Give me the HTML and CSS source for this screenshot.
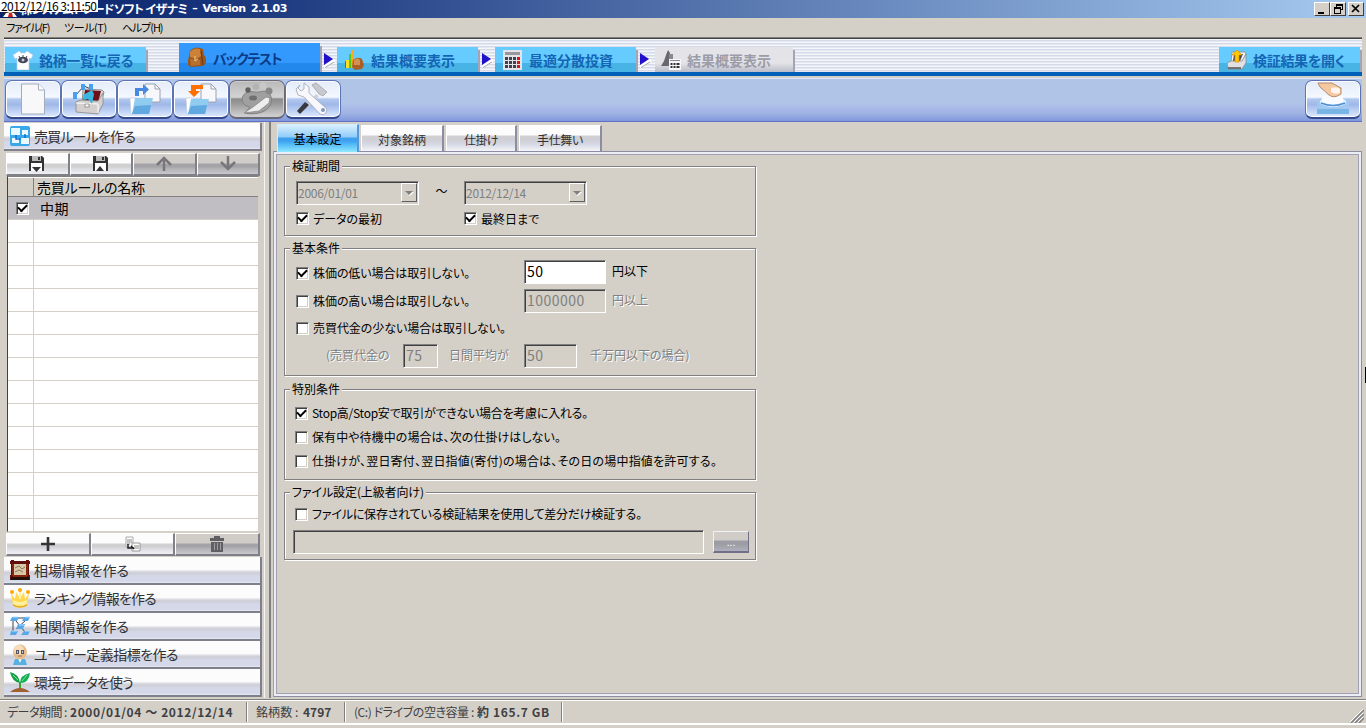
FILE: index.html
```html
<!DOCTYPE html>
<html lang="ja">
<head>
    <meta charset="UTF-8" />
    <meta name="viewport" content="width=device-width, initial-scale=1.0"/>
    <title>イザナミ - Version 2.1.03</title>
    <link rel="stylesheet" href="styles.css">
</head>
<body>
    <header class="titlebar">
        <svg class="app-icon" width="16" height="16"><rect x="1" y="1" width="14" height="12" fill="#222"/><circle cx="8" cy="8" r="4" fill="#f4c8a0"/><path d="M1 16l3-4h8l3 4z" fill="#fff"/><path d="M7 12h3l1 4H6z" fill="#d02020"/></svg>
        <span class="title">株システムトレードソフト イザナミ</span>
        <span class="title version">– Version 2.1.03</span>
        <span class="clock">2012/12/16 3:11:50</span>
        <div class="win-buttons">
            <button><svg width="14" height="12"><path d="M3 9h6v2H3z"/></svg></button>
            <button><svg width="14" height="12"><path d="M5 1h7v6h-2V6h1V3H6v1H5zM3 4h7v7H3zM4 6v4h5V6z" fill-rule="evenodd"/></svg></button>
            <button class="close"><svg width="14" height="12"><path d="M3 2l7 7M10 2L3 9" stroke="#000" stroke-width="1.7"/></svg></button>
        </div>
    </header>
    <nav class="menubar">
        <span class="m-file">ファイル(F)</span>
        <span class="m-tool">ツール(T)</span>
        <span class="m-help">ヘルプ(H)</span>
    </nav>

    <div class="steps">
        <div class="step back">
            <svg width="20" height="20"><path d="M6 1L0 5l2 4 2-1v12h12V8l2 1 2-4-6-4-2 2H8z" fill="#fff" stroke="#b8c8dc" stroke-width=".7"/><ellipse cx="10" cy="10" rx="5" ry="3.2" fill="#445"/><circle cx="10" cy="10" r="1.5" fill="#bcd"/><path d="M6 6l1 2M10 5v2M14 6l-1 2" stroke="#445"/></svg>
            <span>銘柄一覧に戻る</span>
        </div>
        <div class="step active">
            <svg width="21" height="21"><path d="M3 4q4-5 10-3l3 1 1 6 2 3v5l-3 3-12 1-3-2V13l1-4z" fill="#9b561c"/><path d="M3 5q4-5 10-3l1 7-5 3-6-2z" fill="#c98238"/><path d="M3 12l10 1v5l-9 1z" fill="#b87030"/><path d="M8 9v5l3-2" stroke="#f0c890" fill="none"/><path d="M14 4l2 14" stroke="#6b3510" fill="none"/></svg>
            <span class="t-back">バックテスト</span>
        </div>
        <svg class="arrow" width="18" height="29"><path d="M4 24L15 17" stroke="#fff" stroke-width="3"/><path d="M5 24.500L14 19" stroke="#aaa"/><path d="M4 10v12l9-6z" fill="#2211cc"/></svg>
        <div class="step">
            <svg width="20" height="20"><path d="M0 11h4v7H0z" fill="#e83010"/><path d="M1 10h3v8H1z" fill="#ffe020"/><path d="M4 4h4v14H4z" fill="#50c820"/><path d="M6 0h3v18H6z" fill="#ffa818"/><path d="M8 10q5-4 9-1l2 6-2 4-7 1-3-3z" fill="#a86028"/><path d="M9 10q4-3 6 0l0 5-6 0z" fill="#d49050"/></svg>
            <span>結果概要表示</span>
        </div>
        <svg class="arrow" width="18" height="29"><path d="M4 24L15 17" stroke="#fff" stroke-width="3"/><path d="M5 24.500L14 19" stroke="#aaa"/><path d="M4 10v12l9-6z" fill="#2211cc"/></svg>
        <div class="step">
            <svg width="20" height="20"><rect width="19" height="20" fill="#e4e4e8"/><rect x="2" y="2" width="15" height="3" fill="#98989c"/><path d="M2 7h12v11H2z" fill="#404050"/><path d="M14 7h3v11h-3z" fill="#d01818"/><path d="M2 10.500h15M2 14.500h15M5.500 7v11M9.500 7v11M13.500 7v11" stroke="#e4e4e8"/></svg>
            <span>最適分散投資</span>
        </div>
        <svg class="arrow" width="18" height="29"><path d="M4 24L15 17" stroke="#fff" stroke-width="3"/><path d="M5 24.500L14 19" stroke="#aaa"/><path d="M4 10v12l9-6z" fill="#2211cc"/></svg>
        <div class="step disabled">
            <svg width="22" height="20"><path d="M0 16l3-5 2-6 2-5 2 3v13z" fill="#686870"/><path d="M8 4h4v8H8z" fill="#888890"/><rect x="8" y="9" width="12" height="11" fill="#f8f8f8"/><path d="M9 10h10v1H9z" fill="#888"/><path d="M9.500 13h2v2h-2zm3 0h2v2h-2zm3 0h3v2h-3zm-6 3h2v2h-2zm3 0h2v2h-2zm3 0h3v2h-3z" fill="#303038"/></svg>
            <span>結果概要表示</span>
        </div>
        <div class="step open">
            <svg width="20" height="20"><path d="M5 2h13l1 2-4 8H4z" fill="#f4f4f4" stroke="#888" stroke-width=".8"/><path d="M7 4h9l-3 7H6z" fill="#484850"/><path d="M0 13l4-2h11l4-7v9l-4 6H1z" fill="#e0e0e4" stroke="#888" stroke-width=".8"/><path d="M1 18h13" stroke="#555" stroke-width="1.500"/><path d="M10 0l5 5h-3v7H8V5H5z" fill="#ffc800" stroke="#e09000" stroke-width=".7"/></svg>
            <span>検証結果を開く</span>
        </div>
    </div>

    <div class="toolbar">
        <button><svg width="54" height="38"><path d="M15.500 4h17l6 6v24h-23z" fill="#f8f8fa" stroke="#a4acb8"/><path d="M32.500 4v6h6" fill="#fff" stroke="#a4acb8"/></svg></button>
        <button><svg width="54" height="38"><path d="M21 9l19 1 2 2-4 14H20z" fill="#d8d8d8" stroke="#777" stroke-width=".8"/><path d="M23 10l16 1-3 12-15-1z" fill="#701018"/><path d="M14 22l5-2 17 1 5-8v11l-5 10-22-2z" fill="#d4d0d0" stroke="#888" stroke-width=".8"/><path d="M14 23l22 1v9" stroke="#fff" fill="none"/><rect x="23" y="24" width="4" height="3" fill="#fff" stroke="#666" stroke-width=".6"/><path d="M13 16l9-10 9 4" stroke="#444" fill="none"/><path d="M11 12h4v7h-4zM19 4h4v6h-4zM27 4h4v6h-4z" fill="#48a0f0"/><path d="M21 15l9-5 2 4-2 10-4-5-4 1z" fill="#38b8e0"/></svg></button>
        <button><svg width="54" height="38"><path d="M27 4h10l5 5v13H27z" fill="#f8f8fc" stroke="#9aa2ae"/><path d="M37 4v5h5" fill="none" stroke="#9aa2ae"/><path d="M12 18h7l2 3v13h-8z" fill="#fff" stroke="#c0c8d8" stroke-width=".6"/><path d="M17 18h18l-4 16H14z" fill="#90ccf0"/><path d="M17 26l16-1-2 9H14z" fill="#60a8e0"/><path d="M17 16V8h8V4l6 5.500-6 5.500v-4h-4v5z" fill="#4888e0"/></svg></button>
        <button><svg width="54" height="38"><path d="M27 4h10l5 5v13H27z" fill="#f8f8fc" stroke="#9aa2ae"/><path d="M37 4v5h5" fill="none" stroke="#9aa2ae"/><path d="M12 18h7l2 3v13h-8z" fill="#fff" stroke="#c0c8d8" stroke-width=".6"/><path d="M17 19h18l-4 15H14z" fill="#90ccf0"/><path d="M17 26l16-1-2 9H14z" fill="#60a8e0"/><path d="M29 5H17v6h-3l6 6 6-6h-4V9h7z" fill="#ff7000"/></svg></button>
        <button class="pressed"><svg width="54" height="38"><path d="M12 19c0 5 4 7 8 8l-5 6c8 2 18 0 22-4 5-4 6-11 2-16-6-4-9 0-14-1s-12 0-13 7z" fill="#a0a0a0" stroke="#808080"/><ellipse cx="23" cy="18" rx="4" ry="2.500" fill="#707070"/><circle cx="18" cy="10" r="2.700" fill="#606060"/><circle cx="26" cy="7" r="3.500" fill="#b4b4b4"/><circle cx="33" cy="6" r="3.500" fill="#c8c8c8"/><circle cx="39" cy="11" r="3.500" fill="#888"/><path d="M14 33l9-6 13-10 4 1-1 5-10 8z" fill="#eee" stroke="#888" stroke-width=".8"/></svg></button>
        <button><svg width="54" height="38"><path d="M26 5l4-2 11 9-4 4-4-2z" fill="#c8c8ce" stroke="#999" stroke-width=".7"/><path d="M30 14l3 2-11 12-2-2z" fill="#d0d0d8"/><path d="M11 31l8-9 4 3-9 9z" fill="#383840"/><path d="M14 5l-4 4 2 6 6 2 16 17q4 2 6-1l1-4-18-16V7l-5-4v6l-3 2-3-3z" fill="#f8f8fc" stroke="#a0a4b4" stroke-width=".8"/><circle cx="37" cy="30" r="2" fill="#8098c0"/></svg></button>
        <button class="run"><svg width="54" height="38"><path d="M11 19h32v5l-1 9H12z" fill="#a0c8f0"/><path d="M11 29h32v5H11z" fill="#78b4e4"/><ellipse cx="27" cy="22" rx="13" ry="5" fill="#e8f4ff"/><path d="M16 16h21v6q-10 5-21 0z" fill="#f8fbff"/><path d="M15 23q12 5 24 0" stroke="#5090d8" stroke-width="1.500" fill="none"/><path d="M12 3h14l9 5v6q-7 5-12 1L14 7z" fill="#f4c8a0" stroke="#a87850" stroke-width=".8"/><path d="M25 8q6-2 9 1v4q-5 2-9-1z" fill="#fff4f0"/></svg></button>
    </div>

    <main class="work">
        <aside class="sidebar">
            <div class="acc head">
                <svg width="20" height="20"><rect width="20" height="20" rx="2" fill="#38a8e8"/><path d="M1 2h9v7H1zM12 4h6v5h-6zM2 12h7v5H2zM11 12h8v6h-8z" fill="#eaf8ff"/><path d="M6 9v4h5M15 8v4" stroke="#1070d0" stroke-width="1.500" fill="none"/></svg>
                <span class="s-rule">売買ルールを作る</span>
            </div>
            <div class="btns">
                <button><svg width="16" height="16"><path d="M0 0h13l2 2v13H0z" fill="#333"/><path d="M3 0h9v5H3z" fill="#bbb"/><path d="M9 1h2v3H9z" fill="#333"/><path d="M2 7h11v8H2z" fill="#fff"/><path d="M3 11h9l-4.500 5z" fill="#333"/></svg></button>
                <button><svg width="16" height="16"><path d="M0 0h13l2 2v13H0z" fill="#333"/><path d="M3 0h9v5H3z" fill="#bbb"/><path d="M9 1h2v3H9z" fill="#333"/><path d="M2 7h11v8H2z" fill="#fff"/><path d="M3 15h8l-4-5z" fill="#333"/></svg></button>
                <button class="off"><svg width="16" height="16"><path d="M8 15V2M1 9l7-7 7 7" stroke="#77777b" stroke-width="2.500" fill="none"/></svg></button>
                <button class="off"><svg width="16" height="16"><path d="M8 0v13M1 6l7 7 7-7" stroke="#77777b" stroke-width="2.500" fill="none"/></svg></button>
            </div>
            <div class="list">
                <div class="row list-head"><span class="cell"></span><span class="name s-name">売買ルールの名称</span></div>
                <div class="row selected"><span class="cell"><i class="check on"></i></span><span class="name s-mid">中期</span></div>
                <div class="row"><span class="cell"></span></div>
                <div class="row"><span class="cell"></span></div>
                <div class="row"><span class="cell"></span></div>
                <div class="row"><span class="cell"></span></div>
                <div class="row"><span class="cell"></span></div>
                <div class="row"><span class="cell"></span></div>
                <div class="row"><span class="cell"></span></div>
                <div class="row"><span class="cell"></span></div>
                <div class="row"><span class="cell"></span></div>
                <div class="row"><span class="cell"></span></div>
                <div class="row"><span class="cell"></span></div>
                <div class="row"><span class="cell"></span></div>
                <div class="row"><span class="cell"></span></div>
                <div class="row"><span class="cell"></span></div>
            </div>
            <div class="btns lower">
                <button><svg width="16" height="16"><path d="M8 1v14M1 8h14" stroke="#333338" stroke-width="2.600"/></svg></button>
                <button><svg width="16" height="16"><path d="M1 1h7v10H1z" fill="#fff" stroke="#aaa"/><path d="M2 4h5M2 6h5M2 8h3" stroke="#888"/><path d="M7 7h8v8H7z" fill="#fff" stroke="#999"/><path d="M9 10h5M9 12h5" stroke="#888"/><path d="M3 8v4h6M6 10l3 3" stroke="#222" stroke-width="1.500" fill="none"/></svg></button>
                <button class="off"><svg width="16" height="16"><path d="M5 2V0h6v2h4v3H1V2z" fill="#606064"/><path d="M2 6h12v10H2z" fill="#606064"/><path d="M5.500 7v7M8.500 7v7M11.500 7v7" stroke="#a0a0a4"/></svg></button>
            </div>
            <div class="acc">
                <svg width="20" height="20"><path d="M0 1h20v3H0zM0 15h20v5H0zM1 0h3v20H1zM16 0h3v20h-3z" fill="#601008"/><path d="M1 17h18v3H1z" fill="#201008"/><rect x="4" y="4" width="12" height="11" fill="#d8c8a8"/><path d="M5 8l4-2 3 3 3-2M5 12l4-2 4 2" stroke="#907858" fill="none"/><path d="M3 4v12h14V4" stroke="#b03818" fill="none"/></svg>
                <span class="s-mkt">相場情報を作る</span>
            </div>
            <div class="acc">
                <svg width="20" height="20"><path d="M1 5l4 6 1-7 4 6 4-6 1 7 4-6-2 13q-7 4-14 0z" fill="#ffd850"/><path d="M9 4h2v7H9zM3 12q7 4 14 0l-.500 4q-7 3-13 0z" fill="#fff0a0"/><circle cx="2" cy="4" r="2" fill="#ffa800"/><circle cx="10" cy="2" r="2" fill="#ffa800"/><circle cx="18" cy="4" r="2" fill="#ffa800"/><path d="M3 17q7 4 14 0" stroke="#d8a020" fill="none"/></svg>
                <span class="s-rank">ランキング情報を作る</span>
            </div>
            <div class="acc">
                <svg width="20" height="20"><path d="M3 3v14M5 2h11M6 5l9 11M15 5L6 13" stroke="#445" fill="none"/><path d="M2 1h7l-2 4H0zM14 1h6l-2 4h-6zM8 8h7l-2 5H6zM1 15h7l-2 4H0zM14 15h6l-2 4h-7z" fill="#58a8e8"/><path d="M3 1h5M15 1h5M9 9h5M2 15h5M15 15h5" stroke="#b0e0ff"/></svg>
                <span class="s-mkt">相関情報を作る</span>
            </div>
            <div class="acc">
                <svg width="20" height="21"><path d="M5 15h10l2 6H3z" fill="#58b0e0"/><path d="M8 14h4l-2 5z" fill="#fff"/><ellipse cx="10" cy="8" rx="7" ry="7.500" fill="#e4bc8c"/><ellipse cx="9" cy="6" rx="5" ry="5" fill="#f8dcb8"/><path d="M6 6h3v4H6zM11 6h3v4h-3z" fill="#556"/><path d="M7 7h1v2H7zM12 7h1v2h-1z" fill="#bcd"/><path d="M8 12h4" stroke="#a87850"/></svg>
                <span class="s-user">ユーザー定義指標を作る</span>
            </div>
            <div class="acc">
                <svg width="20" height="20"><path d="M10 17V10" stroke="#40a030" stroke-width="2"/><path d="M10 11Q2 10 0 0q9 2 10 11z" fill="#18a048"/><path d="M10 11q0-8 10-10-1 10-10 10z" fill="#10b058"/><path d="M12 9l5-6M8 8L3 3" stroke="#80e080"/><path d="M0 20q10-8 20 0z" fill="#a06030"/></svg>
                <span class="s-env">環境データを使う</span>
            </div>
        </aside>
        <div class="splitter"></div>

        <section class="content">
            <div class="tabs">
                <div class="tab current">基本設定</div>
                <div class="tab w83">対象銘柄</div>
                <div class="tab w71 t-entry">仕掛け</div>
                <div class="tab w83 t-exit">手仕舞い</div>
            </div>
            <div class="page">
                <div class="group g-period">
                    <h2>検証期間</h2>
                    <div class="line">
                        <div class="combo"><span>2006/01/01</span><i class="drop"></i></div>
                        <span class="tilde">～</span>
                        <div class="combo"><span>2012/12/14</span><i class="drop"></i></div>
                    </div>
                    <div class="line">
                        <label class="c-first"><i class="check on"></i>データの最初</label>
                        <label><i class="check on"></i>最終日まで</label>
                    </div>
                </div>

                <div class="group g-basic">
                    <h2>基本条件</h2>
                    <div class="line">
                        <label class="c-price"><i class="check on"></i>株価の低い場合は取引しない。</label>
                        <div class="field enabled">50</div>
                        <span class="unit">円以下</span>
                    </div>
                    <div class="line">
                        <label class="c-price"><i class="check"></i>株価の高い場合は取引しない。</label>
                        <div class="field">1000000</div>
                        <span class="unit grey">円以上</span>
                    </div>
                    <div class="line low">
                        <label class="c-value"><i class="check"></i>売買代金の少ない場合は取引しない。</label>
                    </div>
                    <div class="line grey average">
                        <span class="a-value">(売買代金の</span>
                        <div class="field f-days">75</div>
                        <span class="a-days">日間平均が</span>
                        <div class="field f-amount">50</div>
                        <span class="a-case">千万円以下の場合)</span>
                    </div>
                </div>

                <div class="group g-special">
                    <h2>特別条件</h2>
                    <label class="c-stop"><i class="check on"></i>Stop高/Stop安で取引ができない場合を考慮に入れる。</label>
                    <label class="c-hold"><i class="check"></i>保有中や待機中の場合は、次の仕掛けはしない。</label>
                    <label class="c-next"><i class="check"></i>仕掛けが、翌日寄付、翌日指値(寄付)の場合は、その日の場中指値を許可する。</label>
                </div>

                <div class="group g-file">
                    <h2 class="h-file">ファイル設定(上級者向け)</h2>
                    <label class="c-diff"><i class="check"></i>ファイルに保存されている検証結果を使用して差分だけ検証する。</label>
                    <div class="line">
                        <div class="field path"></div>
                        <button class="browse">...</button>
                    </div>
                </div>
            </div>
        </section>
    </main>

    <footer class="status">
        <div class="st-period"><span>データ期間 : </span><b>2000/01/04 ～ 2012/12/14</b></div>
        <div class="st-count"><span>銘柄数 : </span><b>4797</b></div>
        <div class="st-disk"><span>(C:) ドライブの空き容量 : </span><b>約 165.7 GB</b></div>
        <svg class="grip" width="14" height="14"><path d="M1 14L14 1M5 14l9-9M9 14l5-5" stroke="#808080" stroke-width="1.500"/><path d="M0 13L13 0M4 13l9-9M8 13l5-5" stroke="#fff"/></svg>
    </footer>
    <div class="caret"></div>
</body>
</html>
```
FILE: styles.css
```css
* {
    box-sizing: border-box;
}
body {
    margin: 0;
    width: 1366px;
    height: 728px;
    overflow: hidden;
    position: relative;
    background-color: #d4d0c8;
    color: #000;
    font-family: "Noto Sans CJK JP", sans-serif;
    font-size: 12px;
    line-height: 16px;
    font-feature-settings: "palt";
    white-space: nowrap;
}
svg {
    display: block;
    flex: none;
}
button {
    padding: 0;
    border: none;
    font-family: inherit;
    display: flex;
    align-items: center;
    justify-content: center;
}
i {
    flex: none;
}

/* title and menu */
.titlebar {
    height: 18px;
    position: relative;
    display: flex;
    align-items: center;
    padding-left: 2px;
    background: linear-gradient(to right, #0a246a, #16327a 15%, #a6caf0);
}
.app-icon {
    margin-right: 2px;
}
.title {
    color: #fff;
    font-weight: bold;
    letter-spacing: -0.65px;
}
.version {
    margin-left: 5px;
    font-family: "DejaVu Sans", sans-serif;
    font-size: 11px;
    letter-spacing: -0.5px;
    word-spacing: 2px;
}
.clock {
    position: absolute;
    left: 0;
    top: 0;
    width: 98px;
    height: 12px;
    padding-left: 1px;
    line-height: 12px;
    background: #fff;
    letter-spacing: -0.55px;
}
.win-buttons {
    margin-left: auto;
    margin-right: 2px;
    display: flex;
}
.win-buttons button {
    width: 16px;
    height: 14px;
    background: #d4d0c8;
    border: 1px solid;
    border-color: #fff #404040 #404040 #fff;
}
.win-buttons .close {
    margin-left: 2px;
}
.menubar {
    height: 20px;
    padding-left: 6px;
    padding-bottom: 2px;
    display: flex;
    align-items: center;
}
.m-file,
.m-tool,
.m-help {
    font-size: 11px;
    width: 58px;
    letter-spacing: -1.2px;
}
.m-tool {
    letter-spacing: -0.4px;
}
.m-help {
    letter-spacing: -1.1px;
}

/* step tabs */
.steps {
    height: 38px;
    margin: 0 4px;
    padding: 2px 1px 0;
    box-shadow: 0 -1px #808080, inset 0 1px #404040;
    display: flex;
    align-items: flex-end;
    border-bottom: 4px solid #0060b8;
    background: repeating-linear-gradient(#e4e8f2 0 1px, #f4f6fa 1px 2px, #d4dae8 2px 3px);
}
.step {
    width: 141px;
    height: 25px;
    display: flex;
    align-items: center;
    flex: none;
    padding-left: 8px;
    background: linear-gradient(#66ccff 0 16px, #48b4e6 16px);
    color: #1464b4;
    font-size: 14px;
    font-weight: bold;
    box-shadow: 2px 3px #a4a4b4;
    clip-path: inset(0 -2px 0 0);
}
.step span {
    margin-left: 6px;
    line-height: 20px;
    padding-top: 1px;
}
.back span {
    letter-spacing: -0.35px;
}
.active {
    height: 29px;
    margin-left: 33px;
    background: linear-gradient(#3399ff 0 20px, #2288ec 20px);
    color: #0a3c88;
}
.active span {
    padding-top: 0;
}
.step .t-back {
    letter-spacing: -1.3px;
    margin-left: 5px;
}
.arrow {
    margin: 0 -1px 0 0;
}
.disabled {
    background: linear-gradient(#e4e4e8 0 16px, #b8bcc8);
    color: #9c9ca8;
    width: 138px;
    margin-left: 2px;
    padding-left: 6px;
}
.step.disabled span {
    margin-left: 4px;
}
.open {
    margin-left: auto;
    margin-right: 1px;
    letter-spacing: -0.3px;
}

/* toolbar */
.toolbar {
    height: 44px;
    margin: 2px 4px 0;
    padding: 1px 1px 0;
    display: flex;
    align-items: flex-start;
    border-top: 1px solid #d8e8f8;
    border-bottom: 1px solid #6070c8;
    background: linear-gradient(#b0c4e8 0 24px, #a8b8e8 30px, #a0b4e4 34px, #8098dc);
}
.toolbar button {
    width: 56px;
    height: 39px;
    border-radius: 7px;
    border: 1px solid #5c74b4;
    border-bottom: 2px solid #34488c;
    box-shadow: inset 0 0 0 1px #fff;
    background: linear-gradient(#e4ecfa, #f4f8fe 45%, #b4c8ee 50%, #a0b8e8 65%, #dceaff);
}
.toolbar .pressed {
    background: linear-gradient(#b8b8b8, #d4d4d4 45%, #8c8c8c 50%, #9c9c9c 65%, #d4d4d4);
    border-color: #686878;
    box-shadow: inset 0 0 0 1px #ccc;
}
.toolbar .run {
    margin-left: auto;
}

/* sidebar */
.work {
    height: 576px;
    display: flex;
    padding-left: 4px;
}
.sidebar {
    width: 258px;
    color: #303034;
}
.acc {
    height: 28px;
    padding-left: 6px;
    display: flex;
    align-items: center;
    font-size: 14px;
    border-bottom: 2px solid #80808c;
    border-right: 2px solid #80808c;
    background: linear-gradient(#fcfcfc 0 13px, #e8e8ee 13px 14px, #d0d0d8 15px 17px, #d4d8e8 19px 24px, #e4e8f0);
}
.acc span {
    margin-left: 4px;
    line-height: 20px;
}
.acc.head {
    margin-top: 1px;
    margin-bottom: 2px;
}
.s-rule { letter-spacing: -0.8px; }
.s-mkt { letter-spacing: -0.07px; }
.s-rank { letter-spacing: -0.78px; }
.s-user { letter-spacing: -0.53px; }
.s-env { letter-spacing: -0.84px; }
.s-name { letter-spacing: -0.2px; }
.s-mid { letter-spacing: 0.5px; }
.btns {
    height: 23px;
    padding: 0 2px;
    display: flex;
}
.btns button {
    flex: 1;
    border: 1px solid #fff;
    border-right: 2px solid #808088;
    border-bottom: 2px solid #808088;
    background: linear-gradient(#fcfcfc 0 9px, #d0d0d0 10px 13px, #d8d8e0 14px, #f0f0f4);
}
.btns .off {
    background: linear-gradient(#d0ccc8 0 9px, #a4a4a8 10px 13px, #b0b0b4 14px, #c8c8cc);
}
.list {
    height: 356px;
    margin: 0 3px 1px;
    border: 1px solid #808080;
    border-left-color: #404040;
    border-right-color: #d4d0c8;
    border-bottom-color: #d4d0c8;
    background: #fff;
    overflow: hidden;
}
.row {
    height: 23px;
    display: flex;
    align-items: center;
    font-size: 14px;
    color: #000;
    border-bottom: 1px solid #d4d0c8;
}
.cell {
    width: 26px;
    height: 100%;
    flex: none;
    border-right: 1px solid #d4d0c8;
    display: flex;
    align-items: center;
    padding-left: 8px;
}
.name {
    padding-left: 3px;
}
.list-head {
    height: 20px;
    background: #d4d0c8;
    border-bottom-color: #808080;
    border-top: 1px solid #fff;
}
.list-head .cell {
    border-color: #808080;
}
.selected {
    background: #c0bec2;
}
.selected .cell {
    border-color: #c0bec2;
}
.selected .name {
    padding-left: 6px;
}
.lower {
    margin-bottom: 1px;
}
.splitter {
    width: 7px;
    margin-left: 2px;
    border-left: 1px solid #f4f4f4;
    border-right: 2px solid #808080;
}

/* settings page */
.content {
    flex: 1;
    padding: 3px 4px 0 2px;
}
.tabs {
    height: 26px;
    padding-left: 4px;
    display: flex;
    align-items: flex-start;
}
.tab {
    height: 26px;
    margin-right: 2px;
    line-height: 27px;
    text-align: center;
    color: #303034;
    border: 1px solid #fff;
    border-right: 2px solid #8c8ca4;
    border-bottom: none;
    background: linear-gradient(#fcfcfc 0 9px, #d0d0d4 10px 14px, #d4d8e4 18px, #f4f4f8);
}
.tab.current {
    width: 82px;
    height: 28px;
    margin-top: -1px;
    z-index: 1;
    color: #000;
    border-color: #d0ecff;
    border-right: 2px solid #5898d8;
    background: linear-gradient(#d8f0ff, #90ccf8 12px, #40a0f0 13px 16px, #50b8f8 19px, #90e8ff);
}
.w83 { width: 83px; }
.w71 { width: 71px; }
.t-entry { letter-spacing: -0.57px; }
.t-exit { letter-spacing: -0.34px; }
.page {
    height: 546px;
    padding: 14px 0 0 10px;
    border: 1px solid #8c8ca4;
    box-shadow: inset 0 0 0 2px #ececf4, inset 0 0 0 3px #a0a0b0;
    border-left-color: #a0a0b4;
}
.group {
    width: 472px;
    border: 1px solid #808084;
    box-shadow: 1px 1px #fff, inset 1px 1px #fff;
    display: flex;
    flex-direction: column;
    align-items: flex-start;
}
.group h2 {
    margin: -9px 0 0 5px;
    padding: 0 2px;
    background: #d4d0c8;
    font-size: 12px;
    font-weight: normal;
    line-height: 16px;
}
.g-period { height: 70px; margin-bottom: 12px; }
.g-basic { height: 128px; margin-bottom: 13px; }
.g-special { height: 91px; margin-bottom: 12px; }
.g-file { height: 68px; }
.line {
    display: flex;
    align-items: center;
    height: 27px;
    padding-left: 11px;
}
.group label {
    display: flex;
    align-items: center;
    height: 24px;
}
.check {
    width: 13px;
    height: 13px;
    margin-right: 4px;
    border: 1px solid;
    border-color: #808080 #fff #fff #808080;
    box-shadow: inset 1px 1px #404040, inset -1px -1px #d4d0c8;
    background: #fff;
    display: flex;
    align-items: center;
    justify-content: center;
}
.check.on::after {
    content: "";
    width: 7px;
    height: 4px;
    margin-top: -3px;
    border-left: 2px solid #000;
    border-bottom: 2px solid #000;
    transform: rotate(-45deg);
}
.combo, .field {
    height: 24px;
    border: 1px solid;
    border-color: #808080 #fff #fff #808080;
    box-shadow: inset 1px 1px #404040;
    color: #808080;
    display: flex;
    align-items: center;
    padding-left: 2px;
}
.combo {
    width: 123px;
    padding-left: 1px;
    letter-spacing: -0.27px;
}
.drop {
    width: 16px;
    height: 19px;
    margin-left: auto;
    margin-right: 1px;
    border: 1px solid;
    border-color: #fff #606060 #606060 #fff;
    display: flex;
    align-items: center;
    justify-content: center;
}
.drop::after {
    content: "";
    border: 4px solid transparent;
    border-top-color: #808080;
    border-bottom: none;
    filter: drop-shadow(1px 1px #fff);
}
.tilde {
    width: 45px;
    text-align: center;
    margin-top: -4px;
}
.g-period .line:nth-child(2) { margin-top: 5px; }
.g-period label { padding-bottom: 2px; }
.c-first { width: 168px; }
.field {
    width: 82px;
    font-size: 14px;
    letter-spacing: 0.5px;
    padding-bottom: 2px;
}
.field.enabled {
    background: #fff;
    color: #000;
}
.grey {
    color: #808080;
    text-shadow: 1px 1px #fff;
}
.grey .field {
    text-shadow: none;
}
.g-basic h2 { margin-bottom: 2px; }
.g-basic .line { height: 28px; margin-bottom: 1px; }
.g-basic .line.low { height: 26px; margin-bottom: 0; }
.g-basic .low label { padding-top: 0; padding-bottom: 2px; }
.c-price { width: 228px; letter-spacing: -0.08px; }
.line:nth-child(2) .c-price { padding-top: 2px; }
.c-value { letter-spacing: -0.06px; }
.unit {
    margin-left: 6px;
    margin-top: -2px;
}
.average { padding-left: 41px; }
.average span { margin-top: -2px; }
.a-value { width: 77px; }
.f-days { width: 35px; }
.a-days { width: 75px; margin-left: 11px; }
.f-amount { width: 53px; }
.a-case { margin-left: 13px; }
.g-special label { margin-left: 10px; }
.g-special h2 { margin-bottom: 4px; }
.c-stop { letter-spacing: -0.26px; }
.c-hold { letter-spacing: 0.07px; }
.c-next { letter-spacing: 0.2px; }
.h-file { letter-spacing: -0.11px; }
.c-diff { margin-left: 10px; letter-spacing: -0.2px; margin-top: 2px; }
.g-file .line { padding-left: 8px; margin-top: 2px; }
.path { width: 411px; }
.browse {
    width: 36px;
    height: 22px;
    margin-left: 9px;
    color: #fff;
    font-size: 10px;
    border: 1px solid #f0f0f8;
    border-right-color: #707088;
    border-bottom: 2px solid #707088;
    background: linear-gradient(#d0ccc8 0 8px, #9c9ca4 9px 12px, #b0b0bc);
}

/* status bar */
.status {
    height: 26px;
    margin-top: 1px;
    border-top: 1px solid #808080;
    border-bottom: 2px solid #fff;
    box-shadow: inset 0 1px #fff;
    display: flex;
    align-items: center;
    padding: 1px 2px 0 7px;
    color: #404044;
}
.status div {
    height: 20px;
    display: flex;
    align-items: center;
    white-space: pre;
    border-right: 1px solid #808080;
    box-shadow: 1px 0 #fff;
}
.st-period { width: 240px; }
.st-period span { width: 63px; letter-spacing: -0.53px; }
.st-period b { letter-spacing: 0.6px; }
.st-count { width: 98px; padding-left: 9px; }
.st-count span { width: 47px; letter-spacing: 0.1px; }
.st-disk { width: 217px; padding-left: 9px; }
.st-disk span { width: 123px; letter-spacing: -0.44px; }
.st-disk b { letter-spacing: 0.65px; }
.grip {
    margin-left: auto;
    align-self: flex-end;
}
.caret {
    position: absolute;
    right: 0;
    top: 367px;
    width: 1px;
    height: 16px;
    background: #000;
}
```
